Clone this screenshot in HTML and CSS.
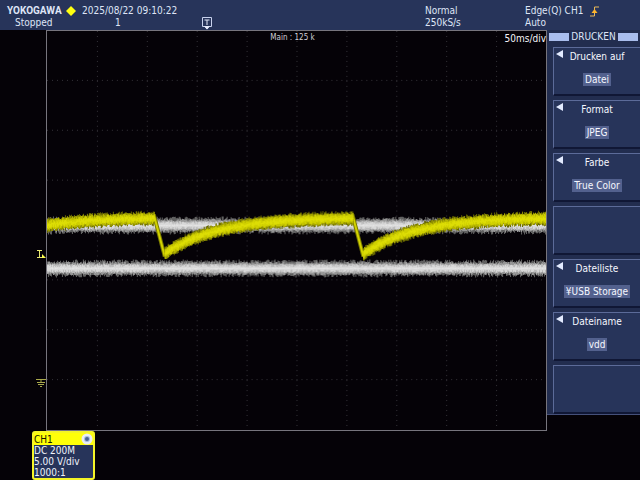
FILE: index.html
```html
<!DOCTYPE html>
<html lang="de">
<head>
<meta charset="utf-8">
<title>YOKOGAWA</title>
<link rel="stylesheet" href="styles.css">
</head>
<body>
<header class="status">
  <div class="brand">
    <div class="logo">YOKOGAWA <svg class="diamond" viewBox="0 0 10 10"><path d="M5 0L10 5L5 10L0 5Z" fill="#ffff10"/></svg></div>
    <div class="state">Stopped</div>
  </div>
  <div class="clock">
    <div>2025/08/22 09:10:22</div>
    <div class="count">1</div>
  </div>
  <div class="position">
    <svg class="trigpos" viewBox="0 0 12 13"><path d="M1.5 .5H10.5V9.5H8L6 12L4 9.5H1.5Z" fill="#27345a" stroke="#c9d2ee"/><path d="M3.5 3H8.5M6 3V8" stroke="#e4e9fa" fill="none"/><path d="M3 9H9L6 12.5Z" fill="#e4e9fa"/></svg>
  </div>
  <div><div>Normal</div><div>250kS/s</div></div>
  <div>
    <div class="edge">Edge(Q) CH1 <svg class="slope" viewBox="0 0 11 11"><path d="M1 10H5.5V1H10" fill="none" stroke="#e9b85a"/><path d="M2.5 7L5.5 3L8.5 7Z" fill="#ffb52b"/></svg></div>
    <div>Auto</div>
  </div>
</header>
<main class="scope">
  <div class="gutter">
    <svg class="level" viewBox="0 0 10 8"><path d="M1 .5H6M1 7.500H6M3.500 .5V7.500" fill="none" stroke="#e8e870"/><path d="M6 4L10 8H6Z" fill="#ffff50"/></svg>
    <svg class="ground" viewBox="0 0 10 9"><path d="M0 .5H10M5 .5V3M1 3.500H9M2 5.500H8M4 7.500H6" fill="none" stroke="#a9a94c"/></svg>
  </div>
  <section class="plot">
    <svg class="wave" id="wave" viewBox="0 0 500 400" preserveAspectRatio="none"></svg>
    <span class="record">Main : 125 k</span>
    <span class="timebase">50ms/div</span>
  </section>
  <nav class="menu">
    <h1 class="menu-title">DRUCKEN</h1>
    <button class="item"><span>Drucken auf</span><b class="value">Datei</b></button>
    <button class="item"><span>Format</span><b class="value">JPEG</b></button>
    <button class="item"><span>Farbe</span><b class="value">True Color</b></button>
    <div class="item blank"></div>
    <button class="item"><span>Dateiliste</span><b class="value">¥USB Storage</b></button>
    <button class="item"><span>Dateiname</span><b class="value">vdd</b></button>
    <div class="item blank"></div>
  </nav>
</main>
<footer class="channels">
  <section class="channel">
    <div class="channel-head">CH1<svg class="dot" viewBox="0 0 12 12"><circle cx="6" cy="6" r="5.500" fill="#e9ecf5"/><circle cx="6" cy="6" r="3" fill="#a3bbdf"/><circle cx="6" cy="6" r="2" fill="#4c6290"/></svg></div>
    <div class="channel-body"><div>DC 200M</div><div>5.00 V/div</div><div>1000:1</div></div>
  </section>
</footer>
<script src="wave.js"></script>
</body>
</html>
```
FILE: wave.js
```js
const svg = document.getElementById("wave");
const NS = "http://www.w3.org/2000/svg";
let seed = 7;
function rand() {
  seed = (seed * 1103515245 + 12345) % 2147483648;
  return seed / 2147483648;
}
function addPath(d, attrs) {
  const p = document.createElementNS(NS, "path");
  p.setAttribute("d", d);
  for (const k in attrs) p.setAttribute(k, attrs[k]);
  svg.appendChild(p);
}

// Graticule: ten by eight divisions of 50 units
let grid = "";
for (let x = 50; x < 500; x += 50) grid += `M${x + 0.5} 0V400`;
for (let y = 50; y < 400; y += 50) grid += `M0 ${y - 0.5}H500`;
addPath(grid, { stroke: "#36343a", "stroke-dasharray": "1 4", fill: "none" });

// A noisy band, one column per unit, built from a wide dark layer to a narrow bright one
function band(centre, layers) {
  for (const [half, jitter, colour] of layers) {
    let d = "";
    for (let x = 0; x < 500; x++) {
      const y = centre(x);
      if (y === null) continue;
      const t = y - half - rand() * jitter;
      const b = y + half + rand() * jitter;
      d += `M${x + 0.5} ${t.toFixed(1)}V${b.toFixed(1)}`;
    }
    addPath(d, { stroke: colour, fill: "none", "stroke-width": 1.1 });
  }
}
const white = [[5, 4, "#606060"], [4, 3, "#969696"], [3, 2, "#bcbcbc"], [1, 3, "#d8d8d8"], [0, 1, "#e4e4e4"]];
band(() => 195, white);
band(() => 238, white);

// Slow recovery with period 199, then a steep drop drawn as a thin line
function recovery(x) {
  const u = (x + 81) % 199;
  return u > 188 ? null : 187 + 36 * Math.exp(-u / 52);
}
for (const x of [108, 307]) {
  const drop = `M${x - 1} 184L${x + 10} 226`;
  addPath(drop, { stroke: "#777700", "stroke-width": 4, fill: "none" });
  addPath(drop, { stroke: "#d2d200", "stroke-width": 2, fill: "none" });
}
band(recovery, [[4, 4, "#656500"], [4, 3, "#929200"], [3, 3, "#b7b700"], [2, 3, "#d0d000"], [0, 3, "#dddd05"]]);
```
FILE: styles.css
```css
* { box-sizing: border-box; }
body {
  margin: 0;
  min-height: 100vh;
  background: #050207;
  color: #dfe5f6;
  font: 10px/12px "DejaVu Sans Condensed", "DejaVu Sans", sans-serif;
  display: flex;
  flex-direction: column;
}
.status {
  display: grid;
  grid-template-columns: 75px 116px 1fr 100px 115px;
  background: #27345a;
  padding: 5px 0 0 7px;
  height: 30px;
}
.logo { display: flex; align-items: center; gap: 4px; font: bold 10px/12px Roboto, sans-serif; }
.diamond { width: 10px; height: 10px; }
.state { padding-left: 8px; }
.count { padding-left: 33px; }
.position { padding: 12px 0 0 3px; }
.trigpos { display: block; width: 12px; height: 13px; }
.edge { display: flex; align-items: center; gap: 6px; }
.slope { width: 11px; height: 11px; }
.scope { display: grid; grid-template-columns: 46px 1fr 93px; align-items: start; }
.gutter { display: flex; flex-direction: column; align-items: flex-end; padding-top: 220px; }
.level { width: 10px; height: 8px; }
.ground { width: 10px; height: 9px; margin-top: 121px; }
.plot {
  position: relative;
  border: 1px solid #77757d;
  color: #f4f4f8;
}
.wave { display: block; width: 100%; height: 399px; }
.record { position: absolute; top: 1px; left: 0; right: 8px; text-align: center; font-size: 8px; color: #d0d0d8; }
.timebase { position: absolute; top: 2px; right: 0; }
.menu {
  background: #222d4f;
  border-bottom: 1px solid #45507a;
  padding: 1px 0 0 6px;
  display: flex;
  flex-direction: column;
  gap: 4px;
  overflow: hidden;
}
.menu-title {
  display: flex;
  align-items: center;
  gap: 2px;
  margin: 0 2px 0 -4px;
  font-size: 10px;
  font-weight: 400;
  line-height: 12px;
}
.menu-title::before, .menu-title::after { content: ""; flex: 1; height: 8px; background: #a9bdec; }
.item {
  position: relative;
  display: flex;
  flex-direction: column;
  align-items: center;
  gap: 10px;
  height: 49px;
  padding: 3px 0 0;
  border: 0 solid #5c6b99;
  border-width: 1px 0 0 1px;
  border-bottom: 2px solid #101735;
  background: #27345a;
  color: #f6f8ff;
  font: inherit;
}
.item:not(.blank)::before {
  content: "";
  position: absolute;
  left: 2px;
  top: 2px;
  border: solid transparent;
  border-width: 4px 7px 4px 0;
  border-right-color: #e3ebff;
}
.value { font-weight: 400; line-height: 13px; padding: 0 2px; background: #53618e; }
.channels { padding: 0 32px; display: flex; }
.channel {
  width: 63px;
  border: 2px solid #f5f527;
  border-radius: 3px;
  background: #27345a;
  color: #f0f3fa;
  line-height: 11px;
}
.channel-head {
  display: flex;
  align-items: center;
  justify-content: space-between;
  height: 12px;
  background: #ffff08;
  color: #171700;
}
.dot { width: 12px; height: 12px; }
```
